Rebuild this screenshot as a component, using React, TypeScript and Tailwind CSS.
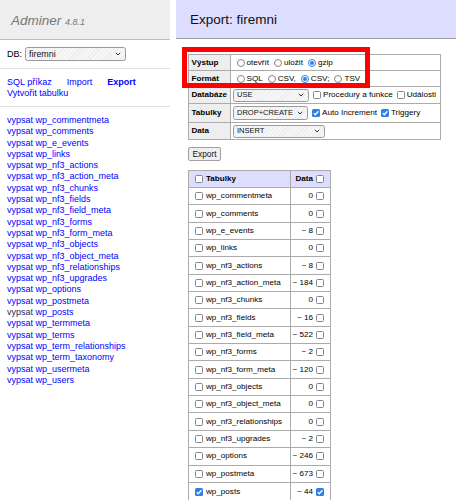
import React from "react";

function Radio({ checked }: { checked?: boolean }) {
  return checked ? (
    <span className="ml-[3px] mr-[2px] flex h-[8px] w-[8px] shrink-0 items-center justify-center rounded-full border border-[#2f7fe8] bg-white">
      <span className="h-[4px] w-[4px] rounded-full bg-[#2f7fe8]" />
    </span>
  ) : (
    <span className="ml-[3px] mr-[2px] h-[8px] w-[8px] shrink-0 rounded-full border border-[#858585] bg-white" />
  );
}

function Check({ checked, className = "" }: { checked?: boolean; className?: string }) {
  return checked ? (
    <span className={"flex h-[8px] w-[8px] shrink-0 items-center justify-center rounded-[1.5px] bg-[#2f7fe8] " + className}>
      <svg viewBox="0 0 8 8" className="h-[8px] w-[8px]">
        <path d="M1.7 4.1 L3.3 5.7 L6.4 2.3" fill="none" stroke="white" strokeWidth="1.3" />
      </svg>
    </span>
  ) : (
    <span className={"h-[8px] w-[8px] shrink-0 rounded-[1.5px] border border-[#858585] bg-white " + className} />
  );
}

function Chevron() {
  return (
    <svg viewBox="0 0 6 4" className="h-[4px] w-[6px] shrink-0">
      <path d="M0.8 0.8 L3 3 L5.2 0.8" fill="none" stroke="#333" strokeWidth="1" />
    </svg>
  );
}

function Select({ value, className }: { value: string; className: string }) {
  return (
    <span
      className={
        "flex shrink-0 items-center justify-between rounded-[2.5px] border border-[#9a9a9a] bg-[repeating-linear-gradient(135deg,#f7f7f7_0px,#f7f7f7_2px,#ececec_2px,#ececec_3px)] pl-[3px] pr-[4px] text-[#111] " +
        className
      }
    >
      <span>{value}</span>
      <Chevron />
    </span>
  );
}

const tables: [string, string, boolean?][] = [
  ["wp_commentmeta", "0"],
  ["wp_comments", "0"],
  ["wp_e_events", "~ 8"],
  ["wp_links", "0"],
  ["wp_nf3_actions", "~ 8"],
  ["wp_nf3_action_meta", "~ 184"],
  ["wp_nf3_chunks", "0"],
  ["wp_nf3_fields", "~ 16"],
  ["wp_nf3_field_meta", "~ 522"],
  ["wp_nf3_forms", "~ 2"],
  ["wp_nf3_form_meta", "~ 120"],
  ["wp_nf3_objects", "0"],
  ["wp_nf3_object_meta", "0"],
  ["wp_nf3_relationships", "0"],
  ["wp_nf3_upgrades", "~ 2"],
  ["wp_options", "~ 246"],
  ["wp_postmeta", "~ 673"],
  ["wp_posts", "~ 44", true],
];

const menuTables = [
  "wp_commentmeta",
  "wp_comments",
  "wp_e_events",
  "wp_links",
  "wp_nf3_actions",
  "wp_nf3_action_meta",
  "wp_nf3_chunks",
  "wp_nf3_fields",
  "wp_nf3_field_meta",
  "wp_nf3_forms",
  "wp_nf3_form_meta",
  "wp_nf3_objects",
  "wp_nf3_object_meta",
  "wp_nf3_relationships",
  "wp_nf3_upgrades",
  "wp_options",
  "wp_postmeta",
  "wp_posts",
  "wp_termmeta",
  "wp_terms",
  "wp_term_relationships",
  "wp_term_taxonomy",
  "wp_usermeta",
  "wp_users",
];

export default function App() {
  return (
    <div className="relative flex h-[500px] w-[456px] overflow-hidden bg-white font-['Liberation_Sans',Arial,Helvetica,sans-serif] text-black">
      {/* Left menu */}
      <div className="w-[170px] shrink-0">
        <div className="h-[40px] border-b border-[#bcbcbc] bg-[#eee] pl-[11px] pt-[12.5px] text-[13.5px] italic leading-[16px] text-[#777]">
          Adminer <span className="text-[9px]">4.8.1</span>
        </div>
        <div className="flex h-[29px] items-start border-b border-[#dedede] pl-[7px] pt-[7px] text-[9px] leading-[14px]">
          <span className="mr-[3px]">DB:</span>
          <Select value="firemni" className="h-[14px] w-[101px] text-[8.9px]" />
        </div>
        <div className="flex h-[38px] flex-wrap content-start gap-x-[15px] border-b border-[#dedede] pl-[7px] pt-[8px] text-[9px] leading-[11.3px] text-[#00f]">
          <span>SQL příkaz</span>
          <span>Import</span>
          <span className="font-bold">Export</span>
          <span>Vytvořit tabulku</span>
        </div>
        <div className="flex flex-col pl-[7px] pt-[8px] text-[9px] leading-[11.3px] text-[#00f]">
          {menuTables.map((t) => (
            <div key={t} className="whitespace-nowrap">
              <span className={t === "wp_posts" ? "text-[#2a2a55]" : ""}>vypsat</span> <span>{t}</span>
            </div>
          ))}
        </div>
      </div>

      {/* Content */}
      <div className="ml-[6px] flex-1">
        <div className="h-[39px] border-b border-[#9a9a9a] bg-[#ddf] pl-[14px] pt-[12px] text-[13.5px] leading-[16px] text-[#111]">
          Export: firemni
        </div>
        <div className="pl-[12px] text-[8.1px] leading-[10px]">
          {/* options table */}
          <div className="mt-[15px] w-[253px] border border-[#ababab]">
            <div className="flex h-[16px] border-b border-[#ababab]">
              <div className="flex w-[42px] items-center border-r border-[#ababab] bg-[#eee] pl-[2.5px] font-bold">Výstup</div>
              <div className="flex flex-1 items-center pl-[2.5px]">
                <span className="mr-[2px] flex items-center"><Radio />otevřít</span>
                <span className="mr-[2px] flex items-center"><Radio />uložit</span>
                <span className="flex items-center"><Radio checked />gzip</span>
              </div>
            </div>
            <div className="flex h-[16px] border-b border-[#ababab]">
              <div className="flex w-[42px] items-center border-r border-[#ababab] bg-[#eee] pl-[2.5px] font-bold">Formát</div>
              <div className="flex flex-1 items-center pl-[2.5px]">
                <span className="mr-[2px] flex items-center"><Radio />SQL</span>
                <span className="mr-[2px] flex items-center"><Radio />CSV,</span>
                <span className="mr-[2px] flex items-center"><Radio checked />CSV;</span>
                <span className="flex items-center"><Radio />TSV</span>
              </div>
            </div>
            <div className="flex h-[17px] border-b border-[#ababab]">
              <div className="flex w-[42px] items-center border-r border-[#ababab] bg-[#eee] pl-[2.5px] font-bold">Databáze</div>
              <div className="flex flex-1 items-center pl-[2px]">
                <Select value="USE" className="h-[13px] w-[76px] text-[7.5px]" />
                <Check className="ml-[4px] mr-[2px]" />
                <span>Procedury a funkce</span>
                <Check className="ml-[4px] mr-[2px]" />
                <span>Události</span>
              </div>
            </div>
            <div className="flex h-[19px] border-b border-[#ababab]">
              <div className="flex w-[42px] items-center border-r border-[#ababab] bg-[#eee] pl-[2.5px] font-bold">Tabulky</div>
              <div className="flex flex-1 items-center pl-[2px]">
                <Select value="DROP+CREATE" className="h-[14px] w-[75px] text-[7.5px]" />
                <Check checked className="ml-[4px] mr-[2px]" />
                <span>Auto Increment</span>
                <Check checked className="ml-[4px] mr-[2px]" />
                <span>Triggery</span>
              </div>
            </div>
            <div className="flex h-[16px]">
              <div className="flex w-[42px] items-center border-r border-[#ababab] bg-[#eee] pl-[2.5px] font-bold">Data</div>
              <div className="flex flex-1 items-center pl-[2px]">
                <Select value="INSERT" className="h-[13px] w-[92px] text-[7.5px]" />
              </div>
            </div>
          </div>

          {/* Export button */}
          <div className="mt-[7px] flex h-[14px] w-[33px] items-center justify-center rounded-[2px] border border-[#a0a0a0] bg-[#efefef] text-[8.3px] text-[#111]">
            Export
          </div>

          {/* tables table */}
          <div className="mt-[9px] w-[143px] border-x border-t border-[#ababab]">
            <div className="flex h-[17px] border-b border-[#ababab] bg-[#ddf] font-bold">
              <div className="flex w-[102px] items-center border-r border-[#ababab] pl-[6px]">
                <Check className="mr-[3px]" />
                Tabulky
              </div>
              <div className="flex flex-1 items-center justify-end pr-[6px]">
                Data
                <Check className="ml-[3px]" />
              </div>
            </div>
            {tables.map(([name, val, chk], i) => (
              <div
                key={name}
                className={"flex h-[17.35px] " + (i < tables.length - 1 ? "border-b border-[#ababab]" : "")}
              >
                <div className="flex w-[102px] items-center border-r border-[#ababab] pl-[6px]">
                  <Check checked={chk} className="mr-[3px]" />
                  {name}
                </div>
                <div className="flex flex-1 items-center justify-end pr-[6px]">
                  {val}
                  <Check checked={chk} className="ml-[3px]" />
                </div>
              </div>
            ))}
          </div>
        </div>
      </div>

      {/* red annotation */}
      <div className="pointer-events-none absolute left-[182px] top-[47px] h-[41px] w-[188px] border-[5px] border-[#ff0000]" />
    </div>
  );
}
